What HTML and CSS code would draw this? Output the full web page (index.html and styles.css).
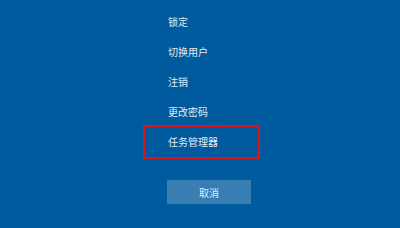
FILE: index.html
```html
<!DOCTYPE html>
<html lang="zh-CN">
<head>
    <meta charset="UTF-8">
    <meta name="viewport" content="width=device-width, initial-scale=1.0">
    <title>安全选项</title>
    <link rel="stylesheet" href="styles.css">
</head>
<body>
    <div class="screen">
        <ul class="menu">
            <li class="menu-item">锁定</li>
            <li class="menu-item">切换用户</li>
            <li class="menu-item">注销</li>
            <li class="menu-item">更改密码</li>
            <li class="menu-item selected">任务管理器</li>
        </ul>
        <button class="cancel-btn">取消</button>
    </div>
</body>
</html>
```

FILE: styles.css
```css
* { margin: 0; padding: 0; box-sizing: border-box; }
body {
    background: #005a9e;
    font-family: "Noto Sans CJK SC", "Noto Sans", sans-serif;
    color: #e3ebf3;
    width: 400px;
    height: 228px;
    overflow: hidden;
}
.screen {
    padding: 7px 0 0 145px;
}
.menu {
    list-style: none;
    width: 113px;
}
.menu-item {
    height: 30px;
    line-height: 30px;
    padding-left: 23px;
    font-size: 10px;
}
.menu-item.selected {
    outline: 2px solid #e0131f;
}
.cancel-btn {
    display: block;
    margin: 23px 0 0 22px;
    width: 84px;
    height: 24px;
    border: none;
    background: rgba(255,255,255,0.22);
    color: #e3ebf3;
    font-family: inherit;
    font-size: 10px;
}
```
